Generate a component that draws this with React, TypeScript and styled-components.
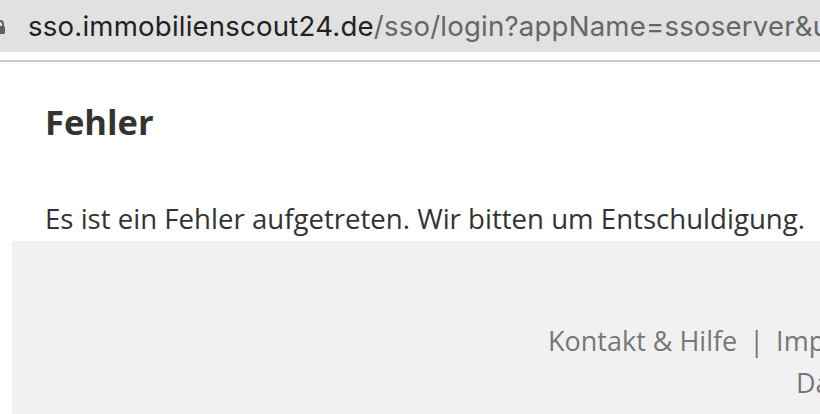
import React from "react";
import styled, { createGlobalStyle } from "styled-components";

const GlobalStyle = createGlobalStyle`
  html, body {
    margin: 0;
    padding: 0;
    background: #ffffff;
    overflow: hidden;
  }
  body {
    width: 820px;
    height: 414px;
    font-family: "Open Sans", Lato, "Noto Sans", sans-serif;
  }
`;

const Page = styled.div`
  display: flex;
  flex-direction: column;
  width: 820px;
  height: 414px;
  overflow: hidden;
`;

const AddressBar = styled.div`
  display: flex;
  align-items: center;
  height: 52px;
  background: #e1e1e1;
  gap: 22px;
  white-space: nowrap;
  overflow: hidden;
  flex-shrink: 0;
`;

const LockIcon = styled.svg`
  flex-shrink: 0;
  margin-left: -6px;
  margin-top: 2px;
`;

const Url = styled.div`
  font-family: Inter, Roboto, "Noto Sans", sans-serif;
  font-size: 27.6px;
  letter-spacing: 0.2px;
  color: #666666;
`;

const Host = styled.span`
  color: #222222;
`;

const Divider = styled.div`
  margin-top: 8px;
  height: 2px;
  background: #cacaca;
  flex-shrink: 0;
`;

const Content = styled.main`
  padding: 0 0 0 45px;
  flex-shrink: 0;
`;

const Title = styled.h1`
  margin: 40px 0 0;
  font-size: 34.5px;
  line-height: 40px;
  font-weight: 700;
  color: #333333;
`;

const Message = styled.p`
  margin: 60px 0 0;
  font-size: 27.6px;
  line-height: 32px;
  color: #333333;
  white-space: nowrap;
`;

const Footer = styled.footer`
  margin: 7px 0 0 12px;
  flex: 1;
  background: #f1f1f1;
  padding: 79px 0 0 536px;
  color: #777777;
  font-size: 27px;
  line-height: 42px;
  white-space: nowrap;
`;

const FooterLine = styled.div<{ $indent?: number }>`
  padding-left: ${(p) => p.$indent ?? 0}px;
`;

const Sep = styled.span`
  margin: 0 12px;
`;

export default function App() {
  return (
    <>
      <GlobalStyle />
      <Page>
        <AddressBar>
          <LockIcon width="12" height="16" viewBox="0 0 12 16">
            <path d="M3 7V5a3 3 0 0 1 6 0v2" fill="none" stroke="#5f5f5f" strokeWidth="2" />
            <rect x="1" y="7" width="10" height="8" rx="1.5" fill="#5f5f5f" />
          </LockIcon>
          <Url>
            <Host>sso.immobilienscout24.de</Host>/sso/login?appName=ssoserver&amp;u
          </Url>
        </AddressBar>
        <Divider />
        <Content>
          <Title>Fehler</Title>
          <Message>Es ist ein Fehler aufgetreten. Wir bitten um Entschuldigung.</Message>
        </Content>
        <Footer>
          <FooterLine>
            Kontakt &amp; Hilfe<Sep>|</Sep>Impressum<Sep>|</Sep>AGB
          </FooterLine>
          <FooterLine $indent={248}>Datenschutz</FooterLine>
        </Footer>
      </Page>
    </>
  );
}
